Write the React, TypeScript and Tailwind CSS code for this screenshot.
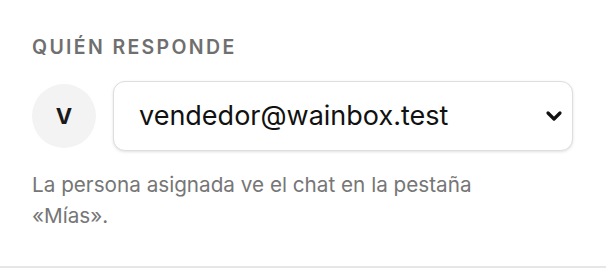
export default function App() {
    return (
        <div className="w-[606px] h-[268px] bg-white flex flex-col font-['Inter',sans-serif]">
            <div className="flex-1 px-[32px] pt-[35px]">
                <h3 className="text-[19.5px] leading-[24px] font-semibold tracking-[0.12em] text-[#6f6f6f]">QUIÉN RESPONDE</h3>
                <div className="flex items-center gap-[17px] mt-[22px] w-[541px]">
                    <div className="w-[64px] h-[64px] shrink-0 rounded-full bg-[#f3f3f3] flex items-center justify-center text-[22px] font-bold text-[#1a1a1a]">
                        V
                    </div>
                    <div className="flex-1 h-[70px] rounded-[12px] border border-[#dedede] bg-white shadow-[0_1px_3px_rgba(0,0,0,0.12)] flex items-center justify-between pl-[25px] pr-[8px]">
                        <span className="text-[27px] text-[#111]">vendedor@wainbox.test</span>
                        <svg width="20" height="12" viewBox="0 0 20 12">
                            <path d="M4 3 L10 9 L16 3" fill="none" stroke="#111" strokeWidth="3.2" strokeLinecap="round" strokeLinejoin="round" />
                        </svg>
                    </div>
                </div>
                <p className="mt-[18px] max-w-[500px] text-[20.7px] leading-[31px] text-[#767676]">
                    La persona asignada ve el chat en la pestaña «Mías».
                </p>
            </div>
            <div className="h-[2px] bg-[#e6e6e6]" />
        </div>
    )
}
